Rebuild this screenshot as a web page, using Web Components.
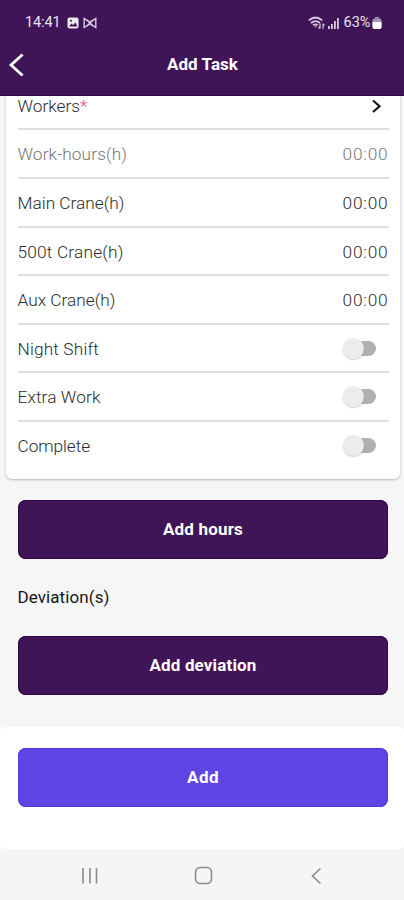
<!DOCTYPE html>
<html lang="en"><head><meta charset="utf-8"><title>Add Task</title>
<style>body{margin:0;width:404px;height:900px;overflow:hidden;font-family:Roboto,"Liberation Sans",sans-serif;background:#f6f6f6}</style></head>
<body><task-screen></task-screen>
<script>
const define=(name,html,ready)=>customElements.define(name,class extends HTMLElement{
  connectedCallback(){
    if(this.shadowRoot)return;
    const t=document.createElement('template');t.innerHTML=html;
    this.attachShadow({mode:'open'}).append(t.content.cloneNode(true));
    if(ready)ready(this,this.shadowRoot);
  }
});
// A one-line label tracked to a given width.
define('track-text',`<style>:host{display:inline-block;white-space:nowrap}span{display:inline-block}</style><span></span>`,(h,r)=>{
  const s=r.querySelector('span'),txt=h.getAttribute('text'),w=+h.getAttribute('w');
  s.textContent=txt;
  const n=txt.length,ls=(w-s.getBoundingClientRect().width)/n;
  s.style.letterSpacing=ls+'px';
});
define('status-bar',`<style>:host{display:flex;align-items:center;height:44px;padding:0 22px 0 25px;color:#e9e1ee;font-size:14.5px;line-height:18px}
svg{display:block;flex:none}.l,.r{display:flex;align-items:center;padding-top:1px}.r{margin-left:auto}.l svg{margin-left:6.500px}.l svg+svg{margin-left:4px}</style>
<div class="l"><track-text text="14:41" w="35.500"></track-text>
<svg width="12" height="12" viewBox="0 0 12 12"><rect x=".5" y=".5" width="11" height="11" rx="2" fill="#eee7f2"/><path d="M2 9.5 4.5 6.5 6 8 8.5 5.5 10.3 9.5Z" fill="#401557"/><circle cx="4" cy="3.8" r="1" fill="#401557"/></svg>
<svg width="14" height="12" viewBox="0 0 14 12" fill="none" stroke="#d8cbe0" stroke-width="1.4"><path d="M1.200 1.500v9L6.500 7V5Z M12.800 1.500v9L7.500 7V5Z"/><path d="M4 3 7 6l3-3M4 9l3-3 3 3"/></svg></div>
<div class="r"><svg width="17" height="14" viewBox="0 0 17 14" fill="none" stroke="#d8cbe0" stroke-width="1.8"><path d="M.8 4.400Q7.500-1.400 14.200 4.400M3 7Q7.500 3.200 12 7M5.200 9.300Q7.500 7.500 9.600 9.300"/><path d="m6.400 10.300 1.200 1.400 1.200-1.400Z" fill="#d8cbe0" stroke="none"/><path d="M12 7.500v5m-1.500-1.500 1.500 1.600M15 12.700v-5m0 0 1.500 1.600" stroke-width="1.200"/></svg>
<svg style="margin-left:3px" width="11" height="12" viewBox="0 0 11 12" fill="#d8cbe0"><path d="M0 9h1.800v3H0zM3 7h1.800v5H3zM6 4h1.800v8H6zM9 1h1.800v11H9z"/></svg>
<track-text style="margin-left:5px" text="63%" w="27"></track-text>
<svg style="margin-left:1.500px" width="10" height="12" viewBox="0 0 10 12"><path d="M3 0h4v1.500H3z" fill="#a795b3"/><rect x=".5" y="1.500" width="9" height="10.500" rx="2" fill="#a795b3"/><path d="M.5 5h9v5a2 2 0 0 1-2 2h-5a2 2 0 0 1-2-2Z" fill="#fff"/></svg></div>`);
define('app-header',`<style>:host{display:block;height:95.500px;box-sizing:border-box;background:#401557;border-bottom:1px solid #2c064b;position:relative;z-index:1}
.t{display:grid;grid-template-columns:60px 1fr 60px;align-items:center;height:41px;color:#fff;font-size:17px;font-weight:700;text-align:center;padding-left:1px}
svg{display:block;margin-left:7px}track-text{padding-bottom:2px}</style>
<status-bar></status-bar><div class="t"><svg width="18" height="24" viewBox="0 0 18 24" fill="none" stroke="#fff" stroke-width="2.800"><path d="M14.600 1.500 3 12l11.600 10.500"/></svg><track-text text="Add Task" w="71"></track-text></div>`);
define('toggle-switch',`<style>:host{display:flex;align-items:center;width:35px;height:24px}
i{width:22px;height:15px;border-radius:8px;background:#b0b0b0;margin-left:-10px}b{position:relative;z-index:1;width:21px;height:21px;border-radius:50%;background:#ececec;box-shadow:0 1px 1.500px #0003}</style><b></b><i></i>`);
define('task-button',`<style>:host{display:flex;align-items:center;justify-content:center;height:59px;border-radius:8px;background:var(--fill,#401557);box-shadow:inset 0 0 0 1px var(--edge,#2b0648);box-sizing:border-box;color:#fff;font-size:17px;font-weight:700;padding:0 0 2px 1px}</style><slot></slot>`);
define('nav-bar',`<style>:host{display:flex;align-items:center;height:51px;padding:3px 79px 0 81px;box-sizing:border-box;justify-content:space-between;background:#f5f5f5}svg{display:block;fill:none;stroke:#8b8b8b;stroke-width:1.600}</style>
<svg width="18" height="18"><path d="M2 1v15.500M9 1v15.500M15.500 1v15.500"/></svg><svg width="20" height="20"><rect x="1.500" y="1.500" width="16" height="16" rx="4.800"/></svg><svg width="16" height="18"><path d="M11.500 1.500 3.500 9l8 7.500"/></svg>`);
customElements.define('field-row',class extends HTMLElement{
  connectedCallback(){
    const a=n=>this.getAttribute(n),k=a('kind');
    const end=k==='switch'?'<toggle-switch></toggle-switch>':k==='link'?'<svg width="12" height="16" viewBox="0 0 12 16" fill="none" stroke="#171717" stroke-width="2.200"><path d="m2 2.500 6.500 5.800L2 14"/></svg>':'<track-text text="00:00" w="46"></track-text>';
    this.attachShadow({mode:'open'}).innerHTML=`<style>:host{display:flex;align-items:center;justify-content:space-between;height:48.600px;box-sizing:border-box;border-bottom:2px solid #dedede;font-size:17.300px;font-weight:300;color:#2b2b2b;line-height:20px}
:host([last]){border-color:transparent}:host([muted]){color:#777}
.s{padding-top:1.500px}.m{color:#f04868}toggle-switch{margin-right:11px}svg{display:block;margin:2px 6px 0 0}</style>
<div class="s"><track-text text="${a('label')}" w="${a('w')}"></track-text>${k==='link'?'<span class="m">*</span>':''}</div>${k?end:`<div class="s">${end}</div>`}`;
  }
});
define('task-screen',`<style>:host{display:flex;flex-direction:column;height:900px;background:#f6f6f6}
.card{margin:-13.700px 4px 0 5.500px;padding:0 11.500px 8.500px 12px;background:#fff;border-radius:0 0 6px 6px;box-shadow:0 1px 2.500px #0004;height:397.200px;box-sizing:border-box}
.body{padding:0 16.500px 0 17.500px;margin-top:21px}
.h{display:flex;align-items:center;height:77px;font-size:17px;color:#161616;padding-bottom:2px;box-sizing:border-box}
.foot{margin-top:auto;height:122px;box-sizing:border-box;padding:21px 16.500px 0 17.500px;background:#fff;border-radius:5px}
.foot task-button{--fill:#5f45e6;--edge:#5337da}</style>
<app-header></app-header>
<div class="card"><field-row label="Workers" w="62.500" kind="link"></field-row><field-row muted label="Work-hours(h)" w="109.500"></field-row><field-row label="Main Crane(h)" w="107"></field-row><field-row label="500t Crane(h)" w="106"></field-row><field-row label="Aux Crane(h)" w="98"></field-row><field-row label="Night Shift" w="81.500" kind="switch"></field-row><field-row label="Extra Work" w="83" kind="switch"></field-row><field-row last label="Complete" w="72.500" kind="switch"></field-row></div>
<div class="body"><task-button><track-text text="Add hours" w="80"></track-text></task-button><div class="h"><track-text text="Deviation(s)" w="92"></track-text></div><task-button><track-text text="Add deviation" w="107"></track-text></task-button></div>
<div class="foot"><task-button><track-text text="Add" w="32"></track-text></task-button></div><nav-bar></nav-bar>`);
</script></body></html>
